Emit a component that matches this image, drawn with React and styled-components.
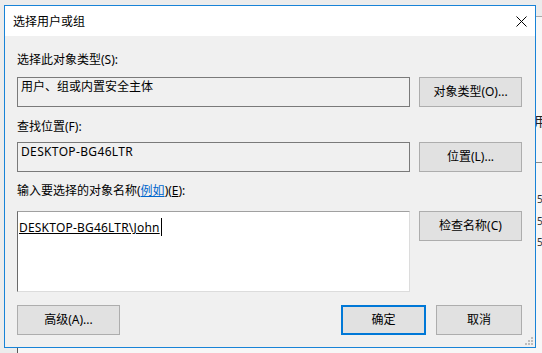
import React from 'react';
import styled, {createGlobalStyle} from 'styled-components';

const GlobalStyle = createGlobalStyle`
   html, body {
      margin: 0;
      padding: 0;
      background: #ececec;
   }
   body {
      font-family: "Noto Sans", "Noto Sans CJK SC", sans-serif;
      font-size: 12px;
      color: #000;
   }
`;

const App = () => {
   return (
      <>
         <GlobalStyle />
         <Desktop>
            <BackWindow>
               <BackGlyph top={96}>用</BackGlyph>
               <BackRule top={145} />
               <BackMark top={176}>5_</BackMark>
               <BackMark top={198}>5_</BackMark>
               <BackMark top={219}>5_</BackMark>
            </BackWindow>

            <Dialog>
               <TitleBar>
                  <Title>选择用户或组</Title>
                  <CloseIcon viewBox="0 0 11 11">
                     <path d="M0.5 0.5 L10.5 10.5 M10.5 0.5 L0.5 10.5" stroke="#000" strokeWidth="1" />
                  </CloseIcon>
               </TitleBar>

               <Body>
                  <Label>选择此对象类型(S):</Label>
                  <FieldRow mt={9}>
                     <ReadBox>用户、组或内置安全主体</ReadBox>
                     <Button>对象类型(O)...</Button>
                  </FieldRow>

                  <Label mt={12}>查找位置(F):</Label>
                  <FieldRow mt={7}>
                     <ReadBox><Latin>DESKTOP-BG46LTR</Latin></ReadBox>
                     <Button>位置(L)...</Button>
                  </FieldRow>

                  <Label mt={11}>
                     输入要选择的对象名称(<Link>例如</Link>)(<u>E</u>):
                  </Label>
                  <FieldRow mt={12}>
                     <EditBox>
                        <Resolved>DESKTOP-BG46LTR\John</Resolved>
                        <Caret />
                     </EditBox>
                     <Button>检查名称(C)</Button>
                  </FieldRow>

                  <Footer>
                     <Button w={103}>高级(A)...</Button>
                     <Spacer />
                     <Button w={85} primary>确定</Button>
                     <Button w={86}>取消</Button>
                  </Footer>
               </Body>

               <Grip viewBox="0 0 8 8">
                  <rect x="6" y="0" width="2" height="2" fill="#bdbdbd" />
                  <rect x="3" y="3" width="2" height="2" fill="#bdbdbd" />
                  <rect x="6" y="3" width="2" height="2" fill="#bdbdbd" />
                  <rect x="0" y="6" width="2" height="2" fill="#bdbdbd" />
                  <rect x="3" y="6" width="2" height="2" fill="#bdbdbd" />
                  <rect x="6" y="6" width="2" height="2" fill="#bdbdbd" />
               </Grip>
            </Dialog>
         </Desktop>
      </>
   );
}

const Desktop = styled.main`
   position: relative;
   width: 542px;
   height: 353px;
   box-sizing: border-box;
   padding: 5px 0 0 4px;
   overflow: hidden;
   background: #ececec;
`;

// the window lying under the dialog, only its edge shows
const BackWindow = styled.div`
   position: absolute;
   left: 17px;
   top: 16px;
   width: 560px;
   height: 380px;
   background: #f7f7f7;
   border-left: 1px solid #5a5a5a;
   border-top: 1px solid #a9a9a9;
`;

const BackGlyph = styled.span`
   position: absolute;
   left: 516px;
   top: ${props => props.top}px;
   font-size: 13px;
   line-height: 16px;
   color: #222;
`;

const BackRule = styled.div`
   position: absolute;
   left: 500px;
   top: ${props => props.top}px;
   width: 60px;
   height: 1px;
   background: #8a8a8a;
`;

const BackMark = styled.span`
   position: absolute;
   left: 519px;
   top: ${props => props.top}px;
   font-size: 10px;
   line-height: 12px;
   color: #333;
`;

const Dialog = styled.section`
   position: relative;
   z-index: 1;
   width: 532px;
   height: 343px;
   box-sizing: border-box;
   display: flex;
   flex-direction: column;
   border: 1px solid #1883d7;
   background: #f0f0f0;
`;

const TitleBar = styled.header`
   height: 30px;
   display: flex;
   align-items: center;
   justify-content: space-between;
   padding: 1px 8px 0 8px;
   box-sizing: border-box;
   background: #fff;
`;

const Title = styled.span`
   font-size: 12px;
   line-height: 16px;
`;

const CloseIcon = styled.svg`
   width: 11px;
   height: 11px;
`;

const Body = styled.div`
   display: flex;
   flex-direction: column;
   padding: 16px 13px 0 12px;
`;

const Label = styled.div`
   margin-top: ${props => props.mt || 0}px;
   line-height: 16px;
   white-space: nowrap;
`;

const Link = styled.span`
   color: #0066cc;
   text-decoration: underline;
`;

const FieldRow = styled.div`
   margin-top: ${props => props.mt || 0}px;
   display: grid;
   grid-template-columns: 393px 103px;
   column-gap: 9px;
   align-items: start;
`;

const ReadBox = styled.div`
   height: 30px;
   box-sizing: border-box;
   padding: 1px 3px 0;
   line-height: 16px;
   border: 1px solid #7a7a7a;
   background: #f0f0f0;
`;

const Latin = styled.span`
   letter-spacing: 0.35px;
`;

const EditBox = styled.div`
   height: 81px;
   box-sizing: border-box;
   padding: 8px 1px 0;
   line-height: 16px;
   background: #fff;
   border: 1px solid;
   border-color: #a0a0a0 #dcdcdc #dcdcdc #6a6a6a;
   display: flex;
   align-items: flex-start;
`;

const Resolved = styled.span`
   text-decoration: underline;
   letter-spacing: 0.2px;
   white-space: nowrap;
`;

const Caret = styled.span`
   width: 1px;
   height: 18px;
   margin: -2px 0 0 1px;
   background: #000;
`;

const Button = styled.div`
   width: ${props => props.w ? `${props.w}px` : 'auto'};
   height: 30px;
   box-sizing: border-box;
   display: flex;
   align-items: center;
   justify-content: center;
   background: #e1e1e1;
   border: ${props => props.primary ? '2px solid #0078d7' : '1px solid #adadad'};
   line-height: 16px;
   white-space: nowrap;
`;

const Footer = styled.div`
   margin-top: 13px;
   display: flex;
   gap: 10px;
`;

const Spacer = styled.div`
   flex: 1;
`;

const Grip = styled.svg`
   position: absolute;
   right: 2px;
   bottom: 2px;
   width: 8px;
   height: 8px;
`;

export default App;
